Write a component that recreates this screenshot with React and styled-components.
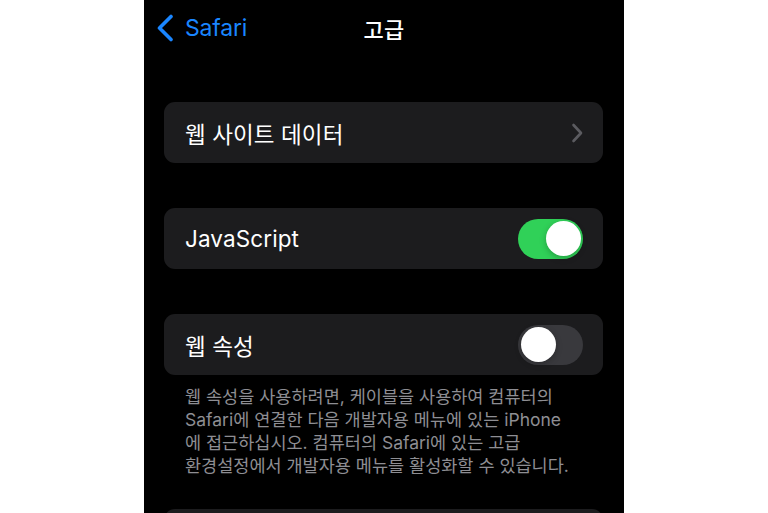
import React, { useState } from 'react';
import styled, { createGlobalStyle } from 'styled-components';

const GlobalStyle = createGlobalStyle`
  html, body {
    margin: 0;
    padding: 0;
    background: #ffffff;
    height: 100%;
    overflow: hidden;
  }
  #root {
    height: 100%;
  }
`;

const App = () => {
  const [js, setJs] = useState(true);
  const [inspect, setInspect] = useState(false);

  return (
    <>
      <GlobalStyle />
      <Page>
        <Screen>
          <NavBar>
            <BackButton>
              <svg width="18" height="28" viewBox="0 0 18 28" fill="none">
                <path
                  d="M15 2.5 L3.5 14 L15 25.5"
                  stroke="#1a86ff"
                  strokeWidth="3.6"
                  strokeLinecap="round"
                  strokeLinejoin="round"
                />
              </svg>
              <BackLabel>Safari</BackLabel>
            </BackButton>
            <NavTitle>고급</NavTitle>
            <span />
          </NavBar>

          <Content>
            <Group>
              <Row>
                <RowLabel>웹 사이트 데이터</RowLabel>
                <svg width="12" height="20" viewBox="0 0 12 20" fill="none">
                  <path
                    d="M2.5 2 L10 10 L2.5 18"
                    stroke="#5b5b60"
                    strokeWidth="2.6"
                    strokeLinecap="round"
                    strokeLinejoin="round"
                  />
                </svg>
              </Row>
            </Group>

            <Group>
              <Row>
                <RowLabel>JavaScript</RowLabel>
                <Toggle $on={js} onClick={() => setJs(!js)}>
                  <Knob $on={js} />
                </Toggle>
              </Row>
            </Group>

            <Group>
              <Row>
                <RowLabel>웹 속성</RowLabel>
                <Toggle $on={inspect} onClick={() => setInspect(!inspect)}>
                  <Knob $on={inspect} />
                </Toggle>
              </Row>
            </Group>
            <Footer>
              웹 속성을 사용하려면, 케이블을 사용하여 컴퓨터의
              <br />
              Safari에 연결한 다음 개발자용 메뉴에 있는 iPhone
              <br />
              에 접근하십시오. 컴퓨터의 Safari에 있는 고급
              <br />
              환경설정에서 개발자용 메뉴를 활성화할 수 있습니다.
            </Footer>

            {/* next group, only its top edge shows */}
            <Group $gap={32}>
              <Row />
            </Group>
          </Content>
        </Screen>
      </Page>
    </>
  );
};

const font = `"Inter", "Noto Sans CJK KR", "Noto Sans", sans-serif`;

const Page = styled.div`
  display: flex;
  justify-content: center;
  height: 513px;
  overflow: hidden;
  background: #ffffff;
`;

const Screen = styled.main`
  width: 480px;
  height: 100%;
  background: #000000;
  font-family: ${font};
  color: #ffffff;
  overflow: hidden;
`;

const NavBar = styled.header`
  display: grid;
  grid-template-columns: 1fr auto 1fr;
  align-items: center;
  height: 56px;
  padding: 0 12px;
`;

const BackButton = styled.div`
  display: flex;
  align-items: center;
  gap: 11px;
  color: #1a86ff;
`;

const BackLabel = styled.span`
  font-size: 23px;
  letter-spacing: -0.2px;
  padding-bottom: 1px;
`;

const NavTitle = styled.h1`
  margin: 0;
  font-size: 22px;
  font-weight: 500;
  letter-spacing: 0.3px;
`;

const Content = styled.div`
  display: flex;
  flex-direction: column;
  padding: 46px 21px 0 20px;
`;

const Group = styled.section`
  margin-top: ${(p) => (p.$gap !== undefined ? p.$gap : 45)}px;
  background: #1c1c1e;
  border-radius: 11px;
  overflow: hidden;
  &:first-child {
    margin-top: 0;
  }
`;

const Row = styled.div`
  display: flex;
  align-items: center;
  justify-content: space-between;
  height: 61px;
  padding: 0 20px 0 21px;
`;

const RowLabel = styled.span`
  font-size: 22.5px;
  letter-spacing: 0.1px;
`;

const Toggle = styled.button`
  position: relative;
  width: 65px;
  height: 40px;
  border: none;
  border-radius: 20px;
  padding: 0;
  cursor: pointer;
  background: ${(p) => (p.$on ? '#30d158' : '#39393d')};
`;

const Knob = styled.span`
  position: absolute;
  top: 2.5px;
  left: ${(p) => (p.$on ? '27.5px' : '2.5px')};
  width: 35px;
  height: 35px;
  border-radius: 50%;
  background: #ffffff;
  box-shadow: 0 2px 6px rgba(0, 0, 0, 0.25);
`;

const Footer = styled.p`
  margin: 10px 0 0;
  padding: 0 0 0 21px;
  font-size: 17.5px;
  line-height: 23px;
  color: #8e8e93;
  white-space: nowrap;
`;

export default App;
